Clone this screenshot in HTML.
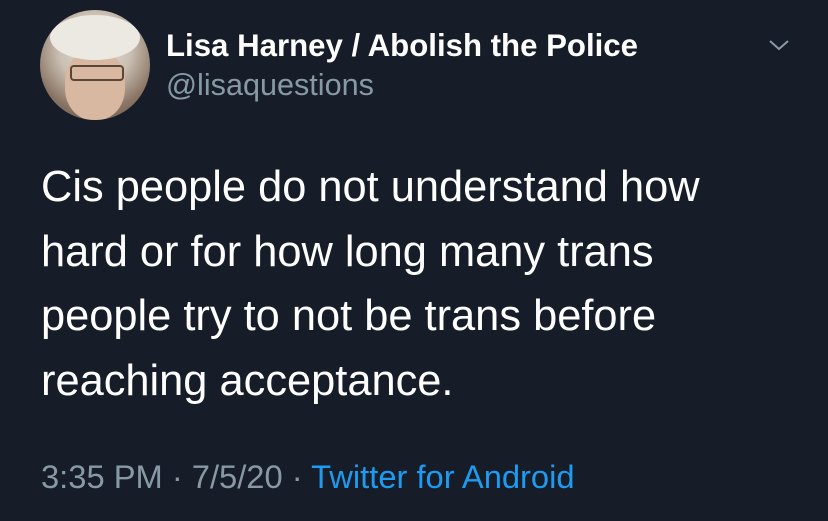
<!DOCTYPE html>
<html><head><meta charset="utf-8"><style>
body{margin:0;width:828px;height:521px;background:#161d29;font-family:"Liberation Sans",sans-serif;position:relative;overflow:hidden}
.av{position:absolute;left:40px;top:10px;width:110px;height:110px;border-radius:50%;background:radial-gradient(circle at 50% 35%,#e8e2d8 0%,#c9bfb2 40%,#8a7565 70%,#5a4a3e 100%);overflow:hidden}
.t{position:absolute;white-space:nowrap}
.name{left:166px;top:28px;font-size:31.2px;font-weight:bold;color:#fff}
.h{left:166px;top:68px;font-size:30.6px;color:#8899a6}
.body{left:41px;top:155px;font-size:43.4px;line-height:64.5px;color:#fff;white-space:normal;width:790px}
.f{left:41px;top:458px;font-size:32.7px;color:#8899a6}
.f span{color:#1d9bf0}
</style></head><body>
<div class="av">
<div style="position:absolute;left:25px;top:40px;width:60px;height:70px;border-radius:45%;background:#d8b8a0"></div>
<div style="position:absolute;left:10px;top:5px;width:90px;height:45px;border-radius:50%;background:#ece8e2"></div>
<div style="position:absolute;left:30px;top:55px;width:50px;height:12px;border:2px solid #5a4636;border-radius:4px"></div>
</div>
<div class="t name">Lisa Harney / Abolish the Police</div>
<div class="t h">@lisaquestions</div>
<svg style="position:absolute;left:768px;top:38px" width="22" height="14" viewBox="0 0 22 14"><path d="M2 3l9 8 9-8" fill="none" stroke="#8899a6" stroke-width="2"/></svg>
<div class="t body">Cis people do not understand how<br>hard or for how long many trans<br>people try to not be trans before<br>reaching acceptance.</div>
<div class="t f">3:35 PM · 7/5/20 · <span>Twitter for Android</span></div>
</body></html>
